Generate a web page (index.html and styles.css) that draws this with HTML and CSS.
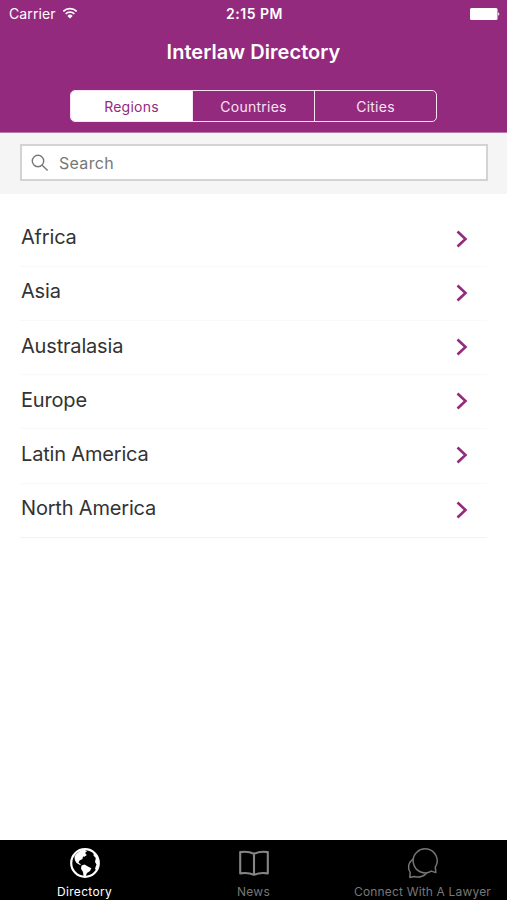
FILE: index.html
```html
<!DOCTYPE html>
<html lang="en">
<head>
    <meta charset="UTF-8">
    <meta name="viewport" content="width=device-width, initial-scale=1.0">
    <title>Interlaw Directory</title>
    <link rel="stylesheet" href="styles.css">
</head>
<body>
    <div class="app">
        <header class="header">
            <div class="status-bar">
                <div class="carrier">
                    <span>Carrier</span>
                    <svg class="wifi" width="16" height="12" viewBox="0 0 16 12">
                        <path d="M1.3 4.3a9.6 9.6 0 0 1 13.4 0M3.7 6.8a6.2 6.2 0 0 1 8.6 0" fill="none" stroke="#fff" stroke-width="1.7"/>
                        <path d="M8 11.6L5.4 8.9a3.7 3.7 0 0 1 5.2 0z" fill="#fff"/>
                    </svg>
                </div>
                <span class="time">2:15 PM</span>
                <svg class="battery" width="30" height="12" viewBox="0 0 30 12">
                    <rect x="0" y="0" width="27.5" height="12" rx="1.5" fill="#fff"/>
                    <path d="M28.2 4.2a2 2 0 0 1 0 3.6z" fill="#fff"/>
                </svg>
            </div>
            <h1>Interlaw Directory</h1>
            <div class="segments">
                <button class="segment active">Regions</button>
                <button class="segment">Countries</button>
                <button class="segment">Cities</button>
            </div>
        </header>

        <div class="search-bar">
            <label class="search-box">
                <svg width="18" height="18" viewBox="0 0 18 18" fill="none" stroke="#777" stroke-width="1.4">
                    <circle cx="7" cy="7" r="5.7"/>
                    <path d="M11.2 11.2L16.6 16.6"/>
                </svg>
                <input type="text" placeholder="Search">
            </label>
        </div>

        <ul class="list">
            <li><span>Africa</span><svg class="chevron" viewBox="0 0 12 18"><path d="M1.5 1.5L9.5 9L1.5 16.5"/></svg></li>
            <li><span>Asia</span><svg class="chevron" viewBox="0 0 12 18"><path d="M1.5 1.5L9.5 9L1.5 16.5"/></svg></li>
            <li><span>Australasia</span><svg class="chevron" viewBox="0 0 12 18"><path d="M1.5 1.5L9.5 9L1.5 16.5"/></svg></li>
            <li><span>Europe</span><svg class="chevron" viewBox="0 0 12 18"><path d="M1.5 1.5L9.5 9L1.5 16.5"/></svg></li>
            <li><span>Latin America</span><svg class="chevron" viewBox="0 0 12 18"><path d="M1.5 1.5L9.5 9L1.5 16.5"/></svg></li>
            <li><span>North America</span><svg class="chevron" viewBox="0 0 12 18"><path d="M1.5 1.5L9.5 9L1.5 16.5"/></svg></li>
        </ul>

        <nav class="tab-bar">
            <a class="tab active">
                <svg width="32" height="32" viewBox="0 0 32 32">
                    <circle cx="16" cy="16" r="13.8" fill="none" stroke="#fff" stroke-width="2.2"/>
                    <!-- north america, south america, africa and europe -->
                    <path d="M5.5 9.5C7.5 6 11 3.5 15 2.5L18 4.2L16 6L17.8 8L15.5 9.8L14 9.5L13.5 12L10.5 13.5L9.5 15.8L12 17.2L11 18L7.5 16L5.8 13Z" fill="#fff"/>
                    <path d="M12.5 18.5L15.5 17.5L18.5 19.3L22.3 21.2L21 24L18 26L16.5 29.5L14.5 29L14 25L12 21.8Z" fill="#fff"/>
                    <path d="M22 3L27 6.5L30 12V19L27.5 24L26 21.5L27.5 17.5L26 15L26.8 11L24.5 8.5L24.8 6Z" fill="#fff"/>
                </svg>
                <span>Directory</span>
            </a>
            <a class="tab">
                <svg width="32" height="32" viewBox="0 0 32 32" fill="none" stroke="#858585" stroke-width="2.1" stroke-linejoin="round">
                    <path d="M16 6.8C12 4.8 7 4.3 2.2 5.1V26.4C7 25.6 12 26 16 27.8C20 26 25 25.6 29.8 26.4V5.1C25 4.3 20 4.8 16 6.8ZM16 6.8V27.8"/>
                </svg>
                <span>News</span>
            </a>
            <a class="tab connect">
                <svg width="32" height="32" viewBox="0 0 32 32" fill="none" stroke="#757575" stroke-width="1.5" stroke-linejoin="round">
                    <path d="M28.8 25.6L28.3 20.2A12 12 0 1 0 24.3 24.1Z"/>
                    <path d="M6.6 11.8C1 15.2.3 21.5 3.2 25.6L2.9 30.4L7.2 29.5C12 30.9 17.4 29.6 20 25.7"/>
                </svg>
                <span>Connect With A Lawyer</span>
            </a>
        </nav>
    </div>
</body>
</html>
```
FILE: styles.css
```css
* {
    box-sizing: border-box;
}

body {
    margin: 0;
    font-family: Inter, "Liberation Sans", sans-serif;
    background: #fff;
    color: #333;
}

.app {
    display: flex;
    flex-direction: column;
    height: 100vh;
    overflow: hidden;
}

/* Header */
.header {
    height: 133px;
    background: #932a7e;
    border-bottom: 1px solid #b87aab;
    color: #fff;
    flex-shrink: 0;
}

.status-bar {
    display: grid;
    grid-template-columns: 1fr auto 1fr;
    align-items: center;
    height: 27px;
    padding: 0 7px 0 9px;
    font-size: 14px;
}

.carrier {
    display: flex;
    align-items: center;
    gap: 6px;
    letter-spacing: 0.1px;
}

.wifi {
    margin-top: -2px;
}

.time {
    font-weight: 600;
    letter-spacing: 0.5px;
}

.battery {
    justify-self: end;
}

h1 {
    margin: 0;
    height: 49px;
    line-height: 50px;
    font-size: 20px;
    font-weight: 600;
    letter-spacing: 0.05px;
    text-align: center;
}

.segments {
    display: flex;
    width: 367px;
    height: 32px;
    margin: 14px auto 0 70px;
    border: 1px solid #f7e3f3;
    border-radius: 5px;
    overflow: hidden;
}

.segment {
    flex: 1;
    padding: 1px 0 0;
    border: 0;
    border-left: 1px solid #f7e3f3;
    background: none;
    color: #f7e3f3;
    font-family: inherit;
    font-size: 14px;
    letter-spacing: 0.25px;
}

.segment:first-child {
    border-left: 0;
}

.segment.active {
    background: #fff;
    color: #932a7e;
}

/* Search */
.search-bar {
    height: 61px;
    padding: 11px 19px 0 20px;
    background: #f5f5f5;
    flex-shrink: 0;
}

.search-box {
    display: flex;
    align-items: center;
    height: 37px;
    padding-left: 9px;
    gap: 10px;
    background: #fff;
    border: 2px solid #d3d3d3;
}

.search-box input {
    flex: 1;
    border: 0;
    outline: 0;
    padding: 0;
    font-family: inherit;
    font-size: 16px;
    letter-spacing: 0.3px;
}

.search-box input::placeholder {
    color: #777;
}

/* Region list */
.list {
    flex: 1;
    list-style: none;
    margin: 0;
    padding: 18.6px 20px 0;
}

.list li {
    display: flex;
    justify-content: space-between;
    align-items: center;
    height: 54.2px;
    padding: 0 19px 4px 1px;
    border-bottom: 1px solid #f9f9f9;
    font-size: 20px;
    letter-spacing: -0.18px;
}

.list li:last-child {
    border-color: #f3f3f3;
}

.chevron {
    width: 12px;
    height: 18px;
    margin-top: 3px;
    fill: none;
    stroke: #932a7e;
    stroke-width: 2.6;
}

/* Bottom tabs */
.tab-bar {
    display: flex;
    height: 60px;
    background: #000;
    flex-shrink: 0;
}

.tab {
    flex: 1;
    display: flex;
    flex-direction: column;
    align-items: center;
    padding-top: 7px;
    color: #777;
    font-size: 12px;
    letter-spacing: 0.3px;
    white-space: nowrap;
}

.tab span {
    margin-top: 5px;
    line-height: 16px;
}

.tab.active {
    color: #fff;
}

.tab.connect {
    letter-spacing: 0.17px;
}
```
